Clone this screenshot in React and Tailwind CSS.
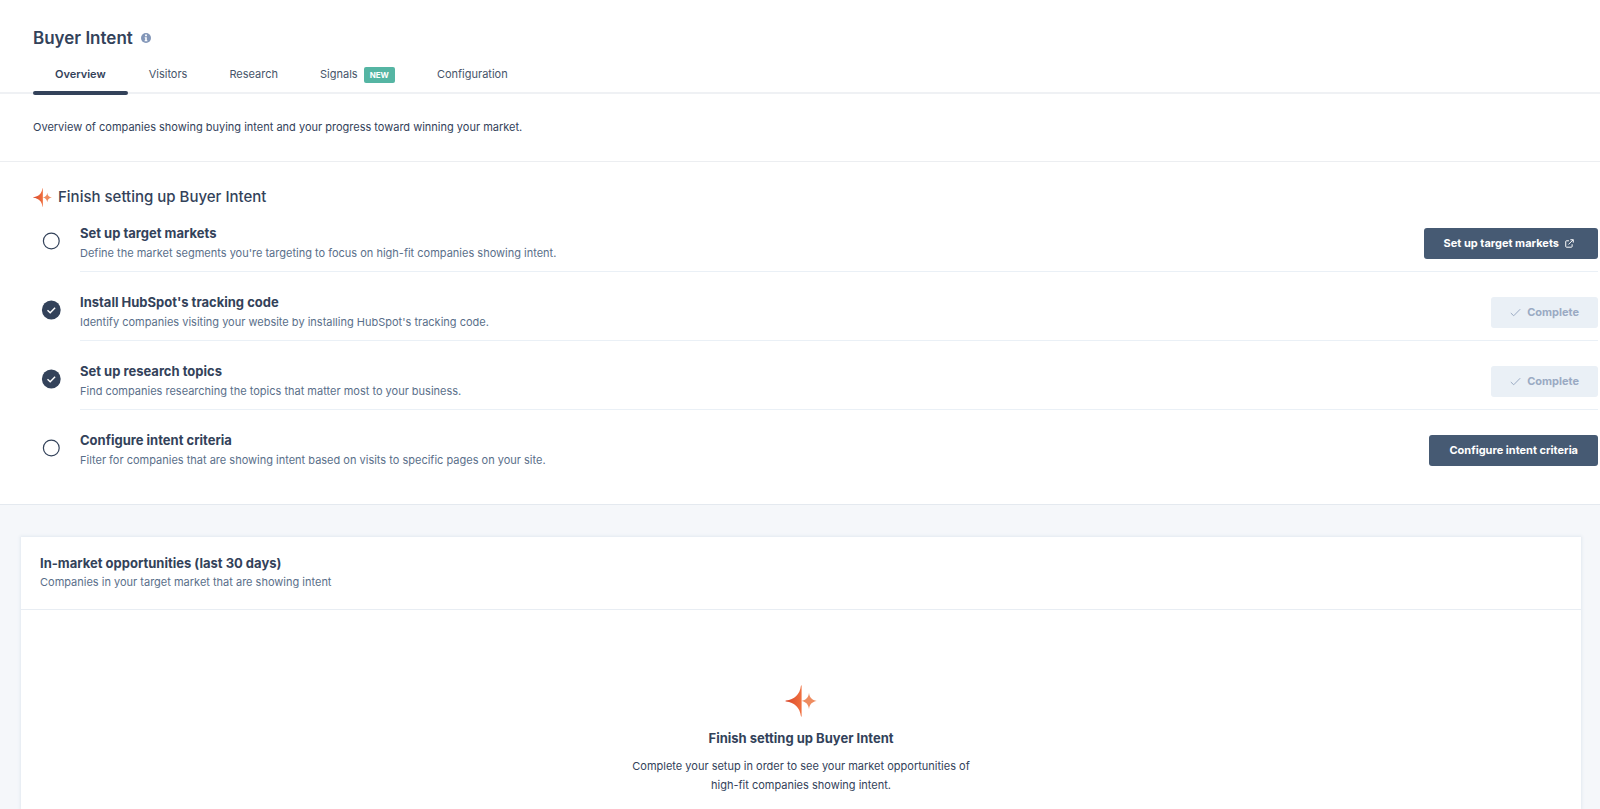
import React from "react";

const tabs = [
  { label: "Overview", active: true },
  { label: "Visitors" },
  { label: "Research" },
  { label: "Signals", badge: "NEW" },
  { label: "Configuration" },
];

const steps = [
  {
    title: "Set up target markets",
    text: "Define the market segments you're targeting to focus on high-fit companies showing intent.",
    action: "Set up target markets",
    external: true,
  },
  {
    title: "Install HubSpot's tracking code",
    text: "Identify companies visiting your website by installing HubSpot's tracking code.",
    done: true,
  },
  {
    title: "Set up research topics",
    text: "Find companies researching the topics that matter most to your business.",
    done: true,
  },
  {
    title: "Configure intent criteria",
    text: "Filter for companies that are showing intent based on visits to specific pages on your site.",
    action: "Configure intent criteria",
  },
];

function Sparkle({ id, className }) {
  return (
    <svg viewBox="0 0 32 32" className={className} aria-hidden="true">
      <defs>
        <linearGradient id={id} x1="0" y1="0" x2="1" y2="0">
          <stop offset="0" stopColor="#d9472b" />
          <stop offset="1" stopColor="#f0703f" />
        </linearGradient>
      </defs>
      <path
        d="M16.6 0.3C16.2 0.3 16 0.6 15.9 1C14.8 9.4 9.5 14.6 1 15.6C0.2 15.7 0.2 16.4 1 16.5C9.5 17.5 14.8 22.6 15.9 31C16 31.4 16.2 31.7 16.6 31.7Z"
        fill={`url(#${id})`}
      />
      <path
        d="M24 7.8C24.5 12.5 27 15.3 31.8 16C27 16.7 24.5 19.5 24 24.2C23.5 19.5 21 16.7 16.4 16C21 15.3 23.5 12.5 24 7.8Z"
        fill="#ee8c60"
      />
    </svg>
  );
}

function StatusIcon({ done }) {
  return (
    <svg viewBox="0 0 20 20" className="size-5 shrink-0" role="img" aria-label={done ? "Done" : "To do"}>
      {done ? (
        <>
          <circle cx="10.3" cy="10" r="9.4" fill="#33425a" />
          <path d="M6.5 10.2L9.2 12.7L14.1 7.7" fill="none" stroke="#fff" strokeWidth="1.4" />
        </>
      ) : (
        <circle cx="10.3" cy="10" r="7.9" fill="none" stroke="#33425a" strokeWidth="1.2" />
      )}
    </svg>
  );
}

function ExternalIcon() {
  return (
    <svg viewBox="0 0 10 10" className="size-[9px]" fill="none" stroke="currentColor" strokeWidth="1.1" aria-hidden="true">
      <path d="M4.4 2H1.6Q0.8 2 0.8 2.8V8.3Q0.8 9.1 1.6 9.1H7.1Q7.9 9.1 7.9 8.3V5.8" />
      <path d="M3.8 6.1L9 0.9M6 0.8H9.2V4" />
    </svg>
  );
}

function StepAction({ step }) {
  if (step.done) {
    return (
      <button disabled className="flex h-[31px] items-center gap-[6px] rounded-[3px] bg-[#eaf0f6] px-[19px] text-[11px] font-bold text-[#9aaac3]">
        <svg viewBox="0 0 11 11" className="size-[11px]" fill="none" stroke="currentColor" strokeWidth="1" aria-hidden="true">
          <path d="M0.8 6L3.7 8.8L10.2 2.2" />
        </svg>
        Complete
      </button>
    );
  }
  return (
    <button
      className={`flex h-[31px] items-center gap-[6px] rounded-[3px] bg-[#465a73] pl-5 text-[11px] font-bold text-white ${
        step.external ? "pr-6" : "pr-5"
      }`}
    >
      {step.action}
      {step.external && <ExternalIcon />}
    </button>
  );
}

export default function App() {
  return (
    <div className="flex min-h-screen flex-col bg-[#f5f7fa] font-['Inter','Open_Sans',sans-serif] text-[11px] text-[#33425a]">
      <header className="bg-white pt-6">
        <div className="flex items-center gap-2 px-[33px]">
          <h1 className="text-[17px] leading-7 font-semibold">Buyer Intent</h1>
          <svg viewBox="0 0 10 10" className="size-[10px]" role="img" aria-label="Info">
            <circle cx="5" cy="5" r="5" fill="#8296b8" />
            <path d="M4.1 1.6H5.9V3.2H4.1ZM3.7 4.2H5.8V7.2H6.4V8.2H3.6V7.2H4.2V5.2H3.7Z" fill="#fff" />
          </svg>
        </div>
        <nav className="flex h-[42px] border-b-2 border-[#eff1f4] px-[33px]">
          {tabs.map((tab) => (
            <a
              key={tab.label}
              href="#"
              className={
                tab.active
                  ? "relative flex h-[43px] items-start px-[22px] pt-3 leading-5 font-semibold"
                  : "flex items-start gap-[6px] px-[21px] pt-3 leading-5 text-[#465469]"
              }
            >
              {tab.label}
              {tab.badge && (
                <span className="mt-[3px] rounded-[2px] bg-[#55b5a3] px-[6px] text-[8px] leading-4 font-bold text-white">
                  {tab.badge}
                </span>
              )}
              {tab.active && <span className="absolute inset-x-0 bottom-0 h-1 rounded-[2px] bg-[#33425a]" />}
            </a>
          ))}
        </nav>
      </header>

      <p className="border-b border-[#eceef1] bg-white px-[33px] pt-[23px] pb-[24px] leading-5">
        Overview of companies showing buying intent and your progress toward winning your market.
      </p>

      <section className="border-b border-[#e4e9ef] bg-white pt-[23px] pr-[2px] pb-[25px] pl-[33px]">
        <h2 className="flex items-center gap-1.5 text-[15px] leading-6 font-medium">
          <Sparkle id="spark-small" className="size-[19px]" />
          Finish setting up Buyer Intent
        </h2>
        <ul className="-mt-1.5">
          {steps.map((step, i) => (
            <li key={step.title} className="flex items-start pl-2">
              <div className="pt-7">
                <StatusIcon done={step.done} />
              </div>
              <div
                className={`ml-[19px] flex h-[69px] flex-1 items-start justify-between border-b ${
                  i < steps.length - 1 ? "border-[#eaf0f6]" : "border-transparent"
                }`}
              >
                <div className="pt-5">
                  <h3 className="text-[13px] leading-5 font-bold">{step.title}</h3>
                  <p className="leading-5 text-[#5a6f8a]">{step.text}</p>
                </div>
                <div className="pt-[25px]">
                  <StepAction step={step} />
                </div>
              </div>
            </li>
          ))}
        </ul>
      </section>

      <main className="flex flex-1 flex-col pt-8 pr-[19px] pl-[21px]">
        <article className="flex flex-1 flex-col bg-white shadow-[0_0_3px_1px_#e3e9f0]">
          <header className="border-b border-[#e8edf3] px-[19px] pt-4 pb-[18px]">
            <h2 className="text-[13px] leading-5 font-bold">In-market opportunities (last 30 days)</h2>
            <p className="leading-[18px] text-[#5a6f8a]">Companies in your target market that are showing intent</p>
          </header>
          <div className="flex flex-col items-center pt-[75px] pb-3 text-center">
            <Sparkle id="spark-large" className="size-8" />
            <h3 className="mt-[11px] text-[13px] leading-5 font-bold">Finish setting up Buyer Intent</h3>
            <p className="mt-[9px] max-w-[352px] leading-[19px]">
              Complete your setup in order to see your market opportunities of high-fit companies showing intent.
            </p>
          </div>
        </article>
      </main>
    </div>
  );
}
